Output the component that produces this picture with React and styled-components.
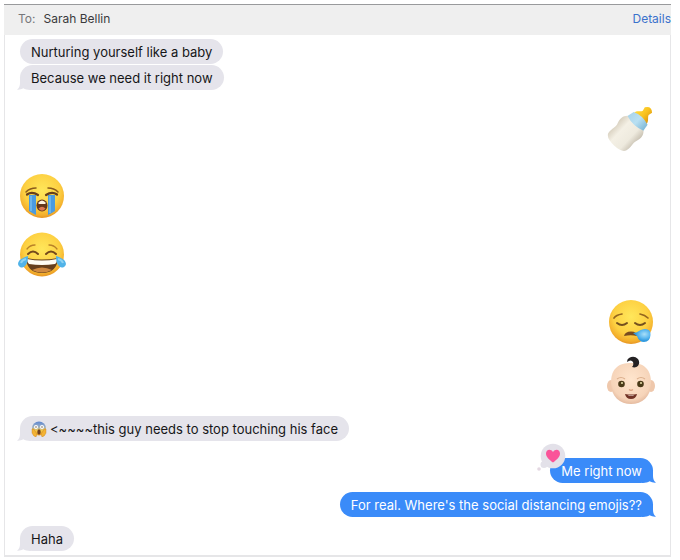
import React from 'react';
import styled, { createGlobalStyle } from 'styled-components';

const GlobalStyle = createGlobalStyle`
  * { box-sizing: border-box; }
  body { margin: 0; background: #fff; font-family: Inter, "Liberation Sans", sans-serif; }
`;

const Window = styled.div`
  margin: 4px 9px 4px 4px;
  border-top: 1px solid #999a9c;
`;

const Header = styled.header`
  display: flex;
  align-items: center;
  gap: 8px;
  height: 30px;
  padding: 0 0 2px 14px;
  background: #efefef;
  font-size: 12px;
  line-height: 16px;
  color: #3a3a3c;
`;

const ToLabel = styled.span`
  color: #77777a;
`;

const DetailsLink = styled.a`
  margin-left: auto;
  color: #3b72cc;
  text-decoration: none;
`;

const Thread = styled.main`
  display: flex;
  flex-direction: column;
  padding: 4px 15px 4px 13px;
  border: solid #e6e6e8;
  border-width: 0 1px 2px;
`;

const Row = styled.div`
  display: flex;
  justify-content: ${(p) => (p.$mine ? 'flex-end' : 'flex-start')};
  margin-top: ${(p) => p.$gap || 0}px;
`;

const Bubble = styled.div`
  position: relative;
  display: flex;
  align-items: center;
  gap: 3px;
  height: 25px;
  margin: 0 2px;
  padding: 0 11px;
  border-radius: 13px;
  font-size: 13px;
  line-height: 18px;
  white-space: nowrap;
  color: ${(p) => (p.$mine ? '#fff' : '#161618')};
  background: ${(p) => (p.$mine ? '#3a8bf9' : '#e5e4eb')};
`;

const TailShape = styled.svg`
  position: absolute;
  bottom: 0;
  width: 14px;
  height: 13px;
  fill: ${(p) => (p.$mine ? '#3a8bf9' : '#e5e4eb')};
  ${(p) => (p.$mine ? 'right: -3px; transform: scaleX(-1);' : 'left: -3px;')}
`;

const Emoji = styled.svg`
  display: block;
  flex: none;
  width: ${(p) => p.$size || 48}px;
  height: ${(p) => p.$size || 48}px;
`;

const Reaction = styled.svg`
  position: absolute;
  left: -14px;
  top: -15px;
  width: 30px;
  height: 30px;
`;

function Tail({ mine }) {
  return (
    <TailShape $mine={mine} viewBox="0 0 14 13" aria-hidden="true">
      <path d="M3 0V6Q3 10.500 0 12.600Q3.500 12.900 6.500 11.200Q8.500 12.800 14 13V0Z" />
    </TailShape>
  );
}

function FaceGradient({ id }) {
  return (
    <radialGradient id={id} cx=".5" cy=".38" r=".62">
      <stop offset="0" stopColor="#ffe75b" />
      <stop offset=".65" stopColor="#fdd042" />
      <stop offset=".9" stopColor="#f3ae2c" />
      <stop offset="1" stopColor="#e69524" />
    </radialGradient>
  );
}

function Bottle() {
  return (
    <Emoji viewBox="0 0 48 48" role="img" aria-label="Baby bottle">
      <defs>
        <linearGradient id="milk">
          <stop offset="0" stopColor="#d8d0bf" />
          <stop offset=".3" stopColor="#f4f0e5" />
          <stop offset=".72" stopColor="#eeeade" />
          <stop offset="1" stopColor="#c9c2b3" />
        </linearGradient>
        <linearGradient id="teat">
          <stop offset="0" stopColor="#ffd83c" />
          <stop offset=".5" stopColor="#f9c21e" />
          <stop offset="1" stopColor="#dc9510" />
        </linearGradient>
        <linearGradient id="ring">
          <stop offset="0" stopColor="#a9d4ea" />
          <stop offset=".5" stopColor="#b9e0f2" />
          <stop offset="1" stopColor="#7eb8d7" />
        </linearGradient>
      </defs>
      <g transform="translate(23 25) rotate(43)">
        <path d="M-8-14C-8-19-4-19-3-22L-4-26Q0-32 5-27L4-23C5-20 9-19 9-13Z" fill="url(#teat)" />
        <path d="M-9-15Q0-19 10-15L11-7Q0-3-11-7Z" fill="url(#ring)" />
        <path d="M-11-8Q0-4 11-8C14-5 15-1 13 4C11 9 14 12 12 18Q10 23 0 23Q-11 23-13 18C-14 12-11 9-13 4C-15-1-14-5-11-8Z" fill="url(#milk)" />
      </g>
    </Emoji>
  );
}

function Crying() {
  return (
    <Emoji viewBox="0 0 48 48" role="img" aria-label="Loudly crying face">
      <defs><FaceGradient id="cryFace" /></defs>
      <circle cx="24" cy="24" r="22" fill="url(#cryFace)" />
      <path d="M11 23H18V43Q14 41 11 39ZM30 23H37V39Q34 41 30 43Z" fill="#4b9bdf" />
      <path d="M13 24V39M32 24V41" stroke="#6cb4ea" strokeWidth="2" />
      <path d="M8 20Q12 16 18 16M30 16Q36 16 40 20" fill="none" stroke="#8a5a1c" strokeWidth="1.500" strokeLinecap="round" />
      <path d="M9 22.500Q14 19 20 23M28 23Q34 19 39 22.500" fill="none" stroke="#68401b" strokeWidth="2.200" strokeLinecap="round" />
      <ellipse cx="24" cy="33.500" rx="5.500" ry="6" fill="#643719" />
      <path d="M20 31Q24 26 28 31L27 32H21Z" fill="#fff4df" />
      <path d="M20.500 36.500Q24 33 27.500 36.500Q24 41 20.500 36.500Z" fill="#dc7853" />
    </Emoji>
  );
}

function Joy() {
  return (
    <Emoji viewBox="0 0 48 48" role="img" aria-label="Face with tears of joy">
      <defs><FaceGradient id="joyFace" /></defs>
      <circle cx="24" cy="24.500" r="22" fill="url(#joyFace)" />
      <path d="M9 19Q12 15 17 15M31 15Q36 15 39 19" fill="none" stroke="#b98228" strokeWidth="1.300" strokeLinecap="round" />
      <path d="M10 24Q15 19 20 24M28 24Q33 19 38 24" fill="none" stroke="#74491c" strokeWidth="2" strokeLinecap="round" />
      <path d="M8 28Q24 31 40 28Q39 43 24 43Q9 43 8 28Z" fill="#67401c" />
      <path d="M9 29Q24 32 39 29Q39 33 37 34Q24 36 11 34Q9 32 9 29Z" fill="#fffdf4" />
      <path d="M14 40Q24 35 34 40Q24 45 14 40Z" fill="#d08a42" />
      <path d="M10 26C10 35 6 39 2 37C-2 34 0 29 10 26ZM38 26C38 35 42 39 46 37C50 34 48 29 38 26Z" fill="#51b3e8" />
      <path d="M8 29Q4 30 3 33M40 29Q44 30 45 33" fill="none" stroke="#8dd2f2" strokeWidth="2" />
    </Emoji>
  );
}

function Sleepy() {
  return (
    <Emoji viewBox="0 0 48 48" role="img" aria-label="Sleepy face">
      <defs>
        <FaceGradient id="sleepFace" />
        <radialGradient id="drop" cx=".65" cy=".4">
          <stop offset="0" stopColor="#a9dff8" />
          <stop offset=".6" stopColor="#60baf0" />
          <stop offset="1" stopColor="#329bdf" />
        </radialGradient>
      </defs>
      <circle cx="24" cy="24" r="22" fill="url(#sleepFace)" />
      <path d="M7 20Q9 17 15 16M33 16Q38 17 41 20" fill="none" stroke="#96671f" strokeWidth="1.700" strokeLinecap="round" />
      <path d="M10 25Q15 29 20 25M28 25Q33 29 38 25" fill="none" stroke="#74501e" strokeWidth="2" strokeLinecap="round" />
      <path d="M17 38Q18 33.500 24 33.500Q30 33.500 30 38Q24 36.500 17 38Z" fill="#784b20" />
      <path d="M26 35C31 35 33 31 38 31Q44 31 43.500 37Q43 44 37 44Q32 44 30 38Z" fill="url(#drop)" />
    </Emoji>
  );
}

function Baby() {
  return (
    <Emoji viewBox="0 0 48 48" role="img" aria-label="Baby">
      <defs>
        <radialGradient id="skin" cx=".5" cy=".4" r=".65">
          <stop offset="0" stopColor="#ffe5cd" />
          <stop offset=".75" stopColor="#f6d4b9" />
          <stop offset="1" stopColor="#deb196" />
        </radialGradient>
      </defs>
      <ellipse cx="4" cy="30" rx="4" ry="6" fill="#efc8ac" />
      <ellipse cx="44" cy="30" rx="4" ry="6" fill="#efc8ac" />
      <path d="M4 27C4 12 12 7 24 7S44 12 44 27C44 41 35 48 24 48S4 41 4 27Z" fill="url(#skin)" />
      <path d="M25 11C31 13 34 7 31 3Q27-1 22 2Q20 3 20 6Q24 3 26 6Q27 9 25 11Z" fill="#252224" />
      <path d="M10 23Q14 20 18 23M30 23Q34 20 38 23" fill="none" stroke="#dcb08d" strokeWidth="1.200" />
      <circle cx="14.500" cy="28" r="3.300" fill="#4a3a18" />
      <circle cx="33.500" cy="28" r="3.300" fill="#4a3a18" />
      <circle cx="15" cy="27" r="1" fill="#ece3ae" />
      <circle cx="34" cy="27" r="1" fill="#ece3ae" />
      <path d="M22 33.500Q24 35 26 33.500" fill="none" stroke="#daa483" strokeWidth="1.300" />
      <path d="M18 38Q24 39 30 38Q29 43 24 43Q19 43 18 38Z" fill="#713326" />
      <path d="M21 39Q24 40 27 39L26 40H22Z" fill="#fff6ed" />
    </Emoji>
  );
}

function Scream() {
  return (
    <Emoji $size={16} viewBox="0 0 16 16" role="img" aria-label="Face screaming in fear">
      <defs>
        <linearGradient id="fear" x1="0" y1="0" x2="0" y2="1">
          <stop offset="0" stopColor="#5c86d1" />
          <stop offset=".4" stopColor="#9eb2c5" />
          <stop offset=".65" stopColor="#f5c743" />
          <stop offset="1" stopColor="#eda029" />
        </linearGradient>
      </defs>
      <circle cx="8" cy="7.500" r="7" fill="url(#fear)" />
      <circle cx="5" cy="6" r="2" fill="#fff" />
      <circle cx="11" cy="6" r="2" fill="#fff" />
      <circle cx="5" cy="6" r=".7" fill="#59402a" />
      <circle cx="11" cy="6" r=".7" fill="#59402a" />
      <ellipse cx="8" cy="11" rx="1.700" ry="2.700" fill="#704020" />
      <path d="M1 8Q3 7 4 10L6 13L5 16Q2 15 1 12ZM15 8Q13 7 12 10L10 13L11 16Q14 15 15 12Z" fill="#f3b334" stroke="#c5781b" strokeWidth=".4" />
    </Emoji>
  );
}

function HeartReaction() {
  return (
    <Reaction viewBox="0 0 30 30" role="img" aria-label="Loved">
      <g fill="#e3e1e9">
        <circle cx="17" cy="13" r="12.300" />
        <circle cx="8" cy="21.500" r="3.500" />
        <circle cx="3" cy="26" r="1.800" fill="#e4d8e2" />
      </g>
      <path d="M17 19.500C13 16.500 10 14 10 10.500C10 6 15 5.500 17 9C19 5.500 24 6 24 10.500C24 14 21 16.500 17 19.500Z" fill="#fa5499" />
    </Reaction>
  );
}

function Message({ mine, gap, tail = true, children }) {
  return (
    <Row $mine={mine} $gap={gap}>
      <Bubble $mine={mine}>
        {tail && <Tail mine={mine} />}
        {children}
      </Bubble>
    </Row>
  );
}

export default function App() {
  return (
    <>
      <GlobalStyle />
      <Window>
        <Header>
          <ToLabel>To:</ToLabel>
          <span>Sarah Bellin</span>
          <DetailsLink href="#details">Details</DetailsLink>
        </Header>
        <Thread>
          <Message tail={false}>Nurturing yourself like a baby</Message>
          <Message gap={1}>Because we need it right now</Message>
          <Row $mine $gap={14}><Bottle /></Row>
          <Row $gap={20}><Crying /></Row>
          <Row $gap={10}><Joy /></Row>
          <Row $mine $gap={20}><Sleepy /></Row>
          <Row $mine $gap={10}><Baby /></Row>
          <Message gap={12}><Scream /><span>&lt;~~~~this guy needs to stop touching his face</span></Message>
          <Message mine gap={17}><HeartReaction />Me right now</Message>
          <Message mine gap={9}>For real. Where's the social distancing emojis??</Message>
          <Message gap={9}>Haha</Message>
        </Thread>
      </Window>
    </>
  );
}
